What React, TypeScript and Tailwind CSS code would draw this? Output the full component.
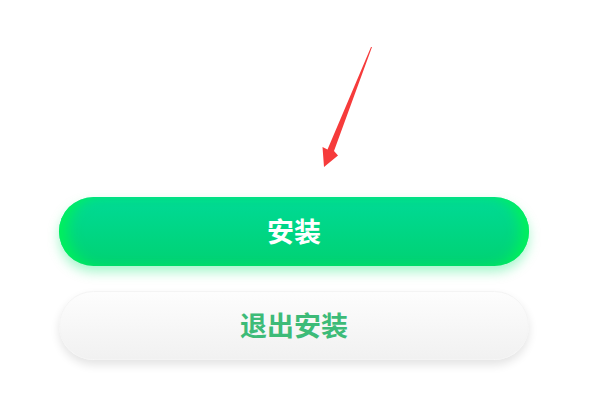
import React from "react";

export default function App() {
  return (
    <div className="relative w-[604px] h-[401px] bg-white overflow-hidden" style={{ fontFamily: '"Noto Sans CJK SC", "Noto Sans", sans-serif' }}>
      <svg className="absolute left-0 top-0 pointer-events-none" width="604" height="401" viewBox="0 0 604 401">
        <polygon
          points="372,47 334,151 338,155.5 324,167 322.5,147 327.5,149.5 371,47"
          fill="#f63b3b"
        />
      </svg>
      <div className="flex flex-col gap-[25px] pt-[197px] pl-[59px] w-[529px]">
        <button className="h-[69px] w-full rounded-full flex items-center justify-center text-white font-bold text-[27px] bg-gradient-to-b from-[#00da96] to-[#00d272] shadow-[inset_14px_0_14px_-6px_#00f25a,inset_-14px_0_14px_-6px_#00f25a,0_6px_12px_rgba(0,230,110,0.35)]">
          安装
        </button>
        <button className="h-[69px] w-full rounded-full flex items-center justify-center text-[#3dbb78] font-bold text-[27px] bg-gradient-to-b from-[#fdfdfd] to-[#f1f1f1] border border-[#f4f4f4] shadow-[0_5px_10px_rgba(0,0,0,0.11)]">
          退出安装
        </button>
      </div>
    </div>
  );
}
